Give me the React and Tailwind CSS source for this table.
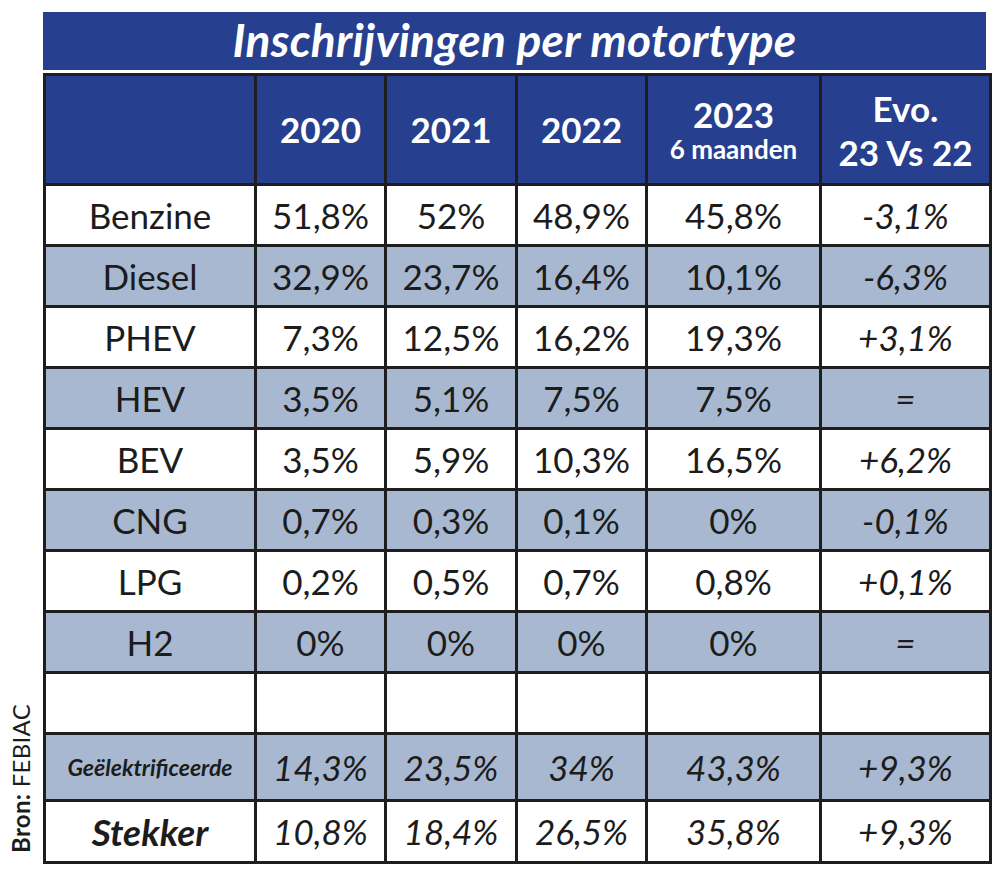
import React from "react";

const rows = [
  { label: "Benzine", v: ["51,8%", "52%", "48,9%", "45,8%"], evo: "-3,1%", shade: false },
  { label: "Diesel", v: ["32,9%", "23,7%", "16,4%", "10,1%"], evo: "-6,3%", shade: true },
  { label: "PHEV", v: ["7,3%", "12,5%", "16,2%", "19,3%"], evo: "+3,1%", shade: false },
  { label: "HEV", v: ["3,5%", "5,1%", "7,5%", "7,5%"], evo: "=", shade: true },
  { label: "BEV", v: ["3,5%", "5,9%", "10,3%", "16,5%"], evo: "+6,2%", shade: false },
  { label: "CNG", v: ["0,7%", "0,3%", "0,1%", "0%"], evo: "-0,1%", shade: true },
  { label: "LPG", v: ["0,2%", "0,5%", "0,7%", "0,8%"], evo: "+0,1%", shade: false },
  { label: "H2", v: ["0%", "0%", "0%", "0%"], evo: "=", shade: true },
];

const cell = "border-[3px] border-[#1e1e1e] text-center align-middle p-0";

export default function App() {
  return (
    <div className="w-[1000px] h-[871px] bg-white flex font-['Lato',sans-serif] text-[#1c1c1c]">
      <div className="w-[43px] flex items-end justify-center pb-[18px]">
        <div className="[writing-mode:vertical-rl] rotate-180 text-[24px] leading-none tracking-[0.3px] text-[#1c1c1c] ml-[-2px]">
          <span className="font-bold">Bron:</span> FEBIAC
        </div>
      </div>
      <div className="flex flex-col pt-[12px]">
        <div className="w-[943px] h-[58px] bg-[#263f8e] flex items-center justify-center">
          <span className="text-white font-bold italic text-[46px] leading-none mt-[-2px] tracking-[0.3px]">Inschrijvingen per motortype</span>
        </div>
        <table className="mt-[3px] table-fixed border-collapse w-[946px]">
          <colgroup>
            <col className="w-[211px]" />
            <col className="w-[130px]" />
            <col className="w-[131px]" />
            <col className="w-[130px]" />
            <col className="w-[174px]" />
            <col className="w-[170px]" />
          </colgroup>
          <thead>
            <tr className="h-[110px] bg-[#263f8e] text-white font-bold">
              <th className={cell}></th>
              <th className={cell + " text-[35px]"}>2020</th>
              <th className={cell + " text-[35px]"}>2021</th>
              <th className={cell + " text-[35px]"}>2022</th>
              <th className={cell}>
                <div className="flex flex-col items-center leading-none">
                  <span className="text-[35px]">2023</span>
                  <span className="text-[26px] mt-[4px]">6 maanden</span>
                </div>
              </th>
              <th className={cell}>
                <div className="flex flex-col items-center leading-[44px] text-[35px]">
                  <span>Evo.</span>
                  <span>23 Vs 22</span>
                </div>
              </th>
            </tr>
          </thead>
          <tbody className="text-[35px]">
            {rows.map((r) => (
              <tr key={r.label} className={"h-[61px] " + (r.shade ? "bg-[#a8b8d1]" : "bg-white")}>
                <td className={cell}>{r.label}</td>
                {r.v.map((x, i) => (
                  <td key={i} className={cell}>{x}</td>
                ))}
                <td className={cell + " italic"}>{r.evo}</td>
              </tr>
            ))}
            <tr className="h-[61px] bg-white">
              <td className={cell}></td>
              <td className={cell}></td>
              <td className={cell}></td>
              <td className={cell}></td>
              <td className={cell}></td>
              <td className={cell}></td>
            </tr>
            <tr className="h-[67px] bg-[#a8b8d1] italic">
              <td className={cell + " text-[23px] font-bold"}>Geëlektrificeerde</td>
              <td className={cell}>14,3%</td>
              <td className={cell}>23,5%</td>
              <td className={cell}>34%</td>
              <td className={cell}>43,3%</td>
              <td className={cell}>+9,3%</td>
            </tr>
            <tr className="h-[62px] bg-white italic">
              <td className={cell + " font-bold text-[37px]"}>Stekker</td>
              <td className={cell}>10,8%</td>
              <td className={cell}>18,4%</td>
              <td className={cell}>26,5%</td>
              <td className={cell}>35,8%</td>
              <td className={cell}>+9,3%</td>
            </tr>
          </tbody>
        </table>
      </div>
    </div>
  );
}
